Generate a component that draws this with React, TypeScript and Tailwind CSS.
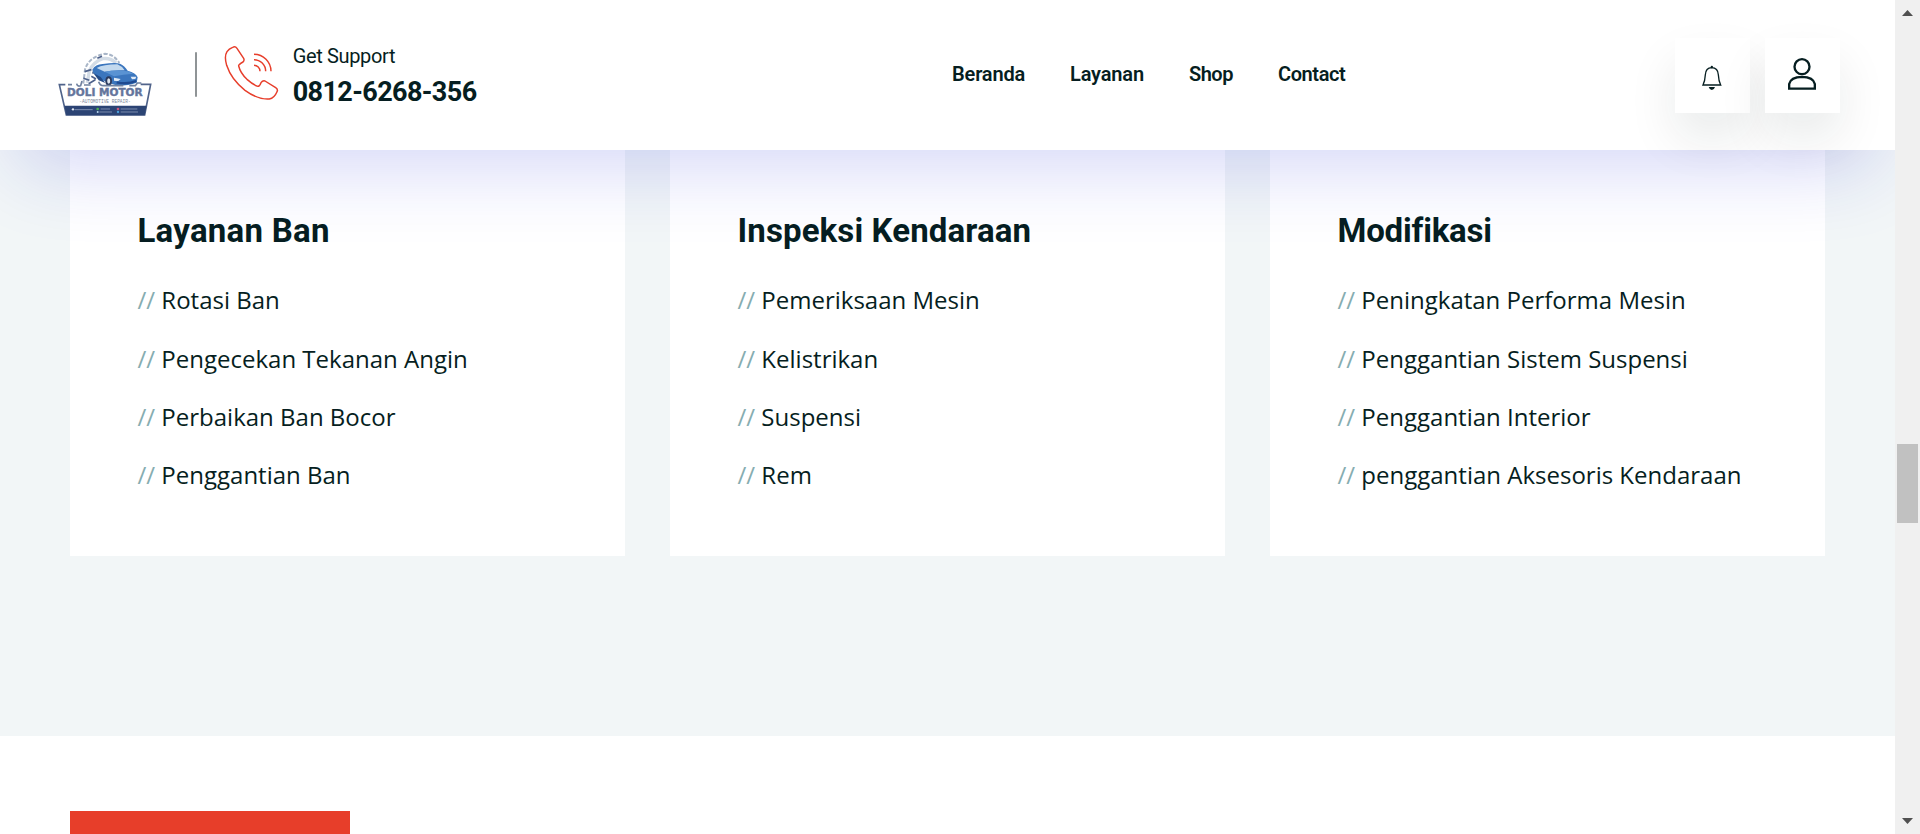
type Service = { title: string; tracking: string; items: string[] };

const services: Service[] = [
  {
    title: "Layanan Ban",
    tracking: "tracking-[0.25px]",
    items: ["Rotasi Ban", "Pengecekan Tekanan Angin", "Perbaikan Ban Bocor", "Penggantian Ban"],
  },
  {
    title: "Inspeksi Kendaraan",
    tracking: "tracking-[0.12px]",
    items: ["Pemeriksaan Mesin", "Kelistrikan", "Suspensi", "Rem"],
  },
  {
    title: "Modifikasi",
    tracking: "tracking-[-0.2px]",
    items: [
      "Peningkatan Performa Mesin",
      "Penggantian Sistem Suspensi",
      "Penggantian Interior",
      "penggantian Aksesoris Kendaraan",
    ],
  },
];

function Logo() {
  return (
    <svg viewBox="54 62 284 198" className="h-[66px] w-[94.67px]" aria-label="Doli Motor">
      <path d="M130 160 L135 118 Q146 80 195 70 Q222 72 238 98" fill="none" stroke="#a9b6c8" strokeWidth="6" strokeDasharray="12 5" />
      <path d="M142 158 L148 122 Q160 95 188 85 Q212 82 228 98" fill="none" stroke="#d3dce6" strokeWidth="10" />
      <path d="M134 124 l20 -6 M130 144 l18 6 M146 160 l20 -12 M166 112 l-8 18 M154 138 l14 8 M172 84 l14 -6" stroke="#4d608a" strokeWidth="5" />
      <path d="M157 118 Q166 102 188 101 Q226 96 240 100 Q254 106 263 121 Q288 127 293 141 L290 157 Q268 166 232 166 L208 158 Q180 150 160 128 Z" fill="#3b76be" />
      <path d="M170 113 Q190 102 232 102 Q247 108 254 120 Q218 118 194 124 Z" fill="#c3d9ee" />
      <path d="M194 124 Q230 117 264 123 L280 130 Q250 132 222 138 Z" fill="#5a93d3" />
      <path d="M160 128 L182 140 L196 158 L176 150 Z" fill="#234a86" />
      <path d="M222 142 l20 4 l-8 7 l-12 -2 Z M272 139 l17 0 l-3 7 l-10 1 Z" fill="#dfeaf6" />
      <path d="M230 156 Q262 163 289 152" fill="none" stroke="#1f4a90" strokeWidth="7" />
      <ellipse cx="206" cy="152" rx="10" ry="14" fill="#2b3a5d" />
      <ellipse cx="206" cy="152" rx="4.5" ry="8" fill="#dfe7f0" />
      <path d="M58 162 L102 162 L112 168 L282 168 L292 161 L332 161 L314 254 L79 254 Z" fill="#fff" />
      <path d="M84 163 h12 M110 160 q2 10 12 6 l4 -14 M132 164 h20 M176 154 q4 12 14 12 h60 M268 166 h18 l6 -8 h12" fill="none" stroke="#6f819f" strokeWidth="5" />
      <path d="M76 163 L58 163 L79 254 L314 254 L332 162 L302 162" fill="none" stroke="#50638a" strokeWidth="5" />
      <path d="M73 226 H320 L314 255 H79 Z" fill="#2c4474" />
      <text
        x="81"
        y="198"
        textLength="227"
        lengthAdjust="spacingAndGlyphs"
        strokeWidth="1.2"
        className="fill-[#64759c] stroke-[#64759c] font-['DejaVu_Sans',sans-serif] text-[29px] font-bold"
      >
        DOLI MOTOR
      </text>
      <text x="118" y="217" textLength="154" lengthAdjust="spacingAndGlyphs" className="fill-[#7c879b] font-['Liberation_Mono',monospace] text-[15px]">
        -AUTOMOTIVE REPAIR-
      </text>
      <path d="M105 238 H158 M182 236 H210 M178 245 H216 M242 236 H292 M242 245 H294" stroke="#8a9abb" strokeWidth="2.5" />
      <circle cx="99" cy="237" r="3.5" fill="#dfe6f0" />
      <circle cx="173" cy="236" r="4" fill="#4caf50" />
      <circle cx="173" cy="245" r="3" fill="#b9d6ee" />
      <circle cx="234" cy="236" r="4" fill="#c9557b" />
      <circle cx="234" cy="245" r="3.5" fill="#4aa3df" />
    </svg>
  );
}

function PhoneIcon() {
  return (
    <svg viewBox="552 44 165 168" className="h-14 w-[55px]" fill="none" stroke="#e73e2b" strokeWidth="4.4" strokeLinejoin="round">
      <path d="M578 51 Q586 47 591 54 L611 84 Q614 90 609 95 Q595 103 596 107 Q601 128 621 147 Q640 164 654 168 Q659 168 663 157 Q668 150 675 152 L707 172 Q715 177 711 184 Q703 203 688 206 Q655 209 615 180 Q574 148 560 105 Q552 78 561 64 Q567 55 578 51 Z" />
      <path d="M642 105 A18 18 0 0 1 660 123 M642 88 A35 35 0 0 1 677 123 M642 72 A51 51 0 0 1 693 123" />
    </svg>
  );
}

function BellIcon() {
  return (
    <svg viewBox="183 195 66 78" className="h-[26px] w-[22px]" fill="none">
      <path d="M189 255 Q195 243 196 224 Q197 204 215 203 Q234 204 235 224 Q236 243 242 255 Z" stroke="#061e21" strokeWidth="4" />
      <circle cx="215.5" cy="201" r="3.5" fill="#061e21" />
      <path d="M206 261 H225 Q222 270 215.5 270 Q209 270 206 261 Z" fill="#061e21" />
    </svg>
  );
}

function UserIcon() {
  return (
    <svg viewBox="441 171 90 102" className="h-[34px] w-[30px]" fill="none" stroke="#061e21" strokeWidth="7">
      <circle cx="486" cy="200" r="22.5" />
      <path d="M447.5 266 V252 Q452 231 486 230.5 Q520 231 524.5 252 V266 Z" />
    </svg>
  );
}

function Header() {
  return (
    <header className="relative z-10 flex h-[150px] shrink-0 items-start bg-white font-[Roboto,sans-serif] text-[#061e21] shadow-[0_35px_80px_-20px_rgba(31,39,215,0.2)]">
      <div className="flex w-[952px] shrink-0">
        <div className="pt-[51px] pl-[58px]">
          <Logo />
        </div>
        <div className="mt-[52px] ml-[42px] h-[45px] w-0.5 shrink-0 rounded-full bg-[#8f9496]" />
        <div className="mt-[45px] ml-[27px] shrink-0">
          <PhoneIcon />
        </div>
        <div className="mt-11 ml-3.5 whitespace-nowrap">
          <div className="text-xl leading-6 tracking-[-0.35px]">Get Support</div>
          <div className="mt-2 text-[27px] leading-8 font-bold tracking-[-0.6px]">0812-6268-356</div>
        </div>
      </div>
      <nav className="flex pt-[62px] text-xl leading-6 font-semibold whitespace-nowrap">
        <a className="w-[118px] tracking-[-0.15px]">Beranda</a>
        <a className="w-[119px] tracking-[-0.15px]">Layanan</a>
        <a className="w-[89px] tracking-[-0.5px]">Shop</a>
        <a className="tracking-[-0.4px]">Contact</a>
      </nav>
      <div className="mt-[38px] mr-[55px] ml-auto flex gap-[15px]">
        <button className="flex size-[75px] items-center justify-center bg-white pt-1 pr-px shadow-[0_25px_50px_rgba(6,30,33,0.09)]">
          <BellIcon />
        </button>
        <button className="flex size-[75px] items-start justify-center bg-white pt-[19px] pr-px shadow-[0_25px_50px_rgba(6,30,33,0.09)]">
          <UserIcon />
        </button>
      </div>
    </header>
  );
}

function ServiceCard({ service }: { service: Service }) {
  return (
    <article className="h-[406px] bg-white pt-[61px] pl-[67.5px] text-[#061e21]">
      <h3 className={"font-[Roboto,sans-serif] text-[33px] leading-10 font-bold whitespace-nowrap " + service.tracking}>
        {service.title}
      </h3>
      <ul className="mt-[20.4px] font-['Open_Sans',sans-serif] text-2xl leading-[58.2px] whitespace-nowrap">
        {service.items.map((item) => (
          <li key={item}>
            <span className="text-[#86adb1]">//</span> {item}
          </li>
        ))}
      </ul>
    </article>
  );
}

function Scrollbar() {
  return (
    <aside className="flex w-[25px] shrink-0 flex-col items-center bg-[#f0f0f0]">
      <svg viewBox="0 0 11 6" className="mt-2.5 h-1.5 w-[11px]" fill="#505050">
        <path d="M5.5 0 L11 6 H0 Z" />
      </svg>
      <div className="mt-[428px] h-[79px] w-[21px] bg-[#c1c1c1]" />
      <svg viewBox="0 0 11 6" className="mt-auto mb-2.5 h-1.5 w-[11px]" fill="#505050">
        <path d="M0 0 H11 L5.5 6 Z" />
      </svg>
    </aside>
  );
}

export default function App() {
  return (
    <div className="flex h-[834px] w-full overflow-hidden bg-white">
      <div className="flex min-w-0 flex-1 flex-col overflow-hidden">
        <Header />
        <section className="grid h-[586px] shrink-0 grid-cols-3 items-start gap-[45px] bg-[#f2f6f7] px-[70px]">
          {services.map((service) => (
            <ServiceCard key={service.title} service={service} />
          ))}
        </section>
        <section className="flex-1 px-[70px] pt-[75px]">
          <div className="h-full w-[280px] bg-[#e73e2a]" />
        </section>
      </div>
      <Scrollbar />
    </div>
  );
}
